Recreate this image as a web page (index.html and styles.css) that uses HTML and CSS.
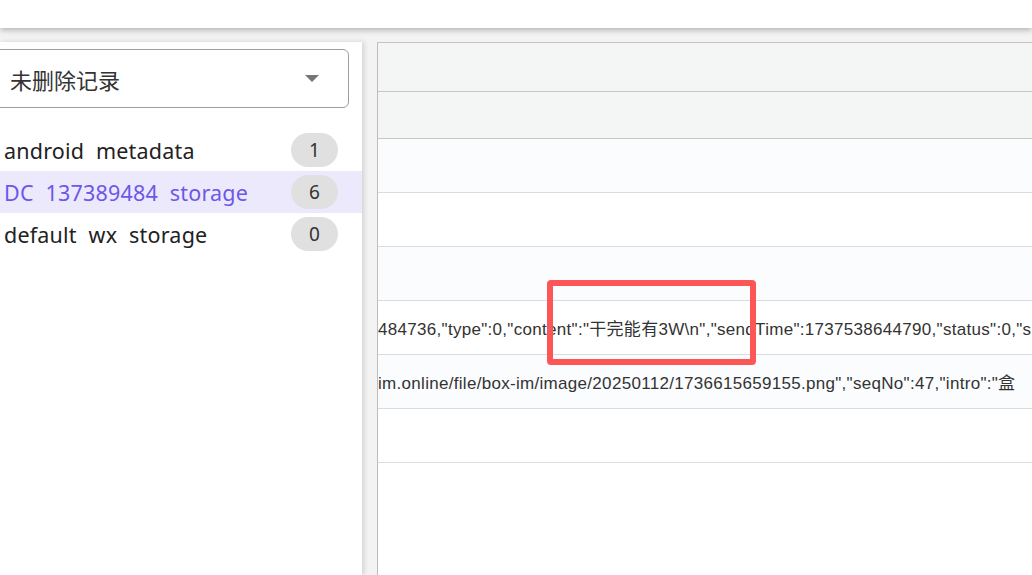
FILE: index.html
```html
<!DOCTYPE html>
<html lang="zh-CN">
<head>
    <meta charset="UTF-8">
    <meta name="viewport" content="width=device-width, initial-scale=1.0">
    <title>存储查看</title>
    <link rel="stylesheet" href="styles.css">
</head>
<body>
    <header class="top-bar"></header>

    <div class="main">
        <!-- 左侧：表列表 -->
        <aside class="sidebar">
            <div class="select-box">
                <span class="select-text">未删除记录</span>
                <span class="select-arrow"></span>
            </div>
            <ul class="table-list">
                <li class="table-item">
                    <span class="table-name">android metadata</span>
                    <span class="badge">1</span>
                </li>
                <li class="table-item active">
                    <span class="table-name">DC 137389484 storage</span>
                    <span class="badge">6</span>
                </li>
                <li class="table-item">
                    <span class="table-name">default wx storage</span>
                    <span class="badge">0</span>
                </li>
            </ul>
        </aside>

        <!-- 右侧：数据表 -->
        <section class="panel">
            <div class="head-row"></div>
            <div class="head-row second"></div>
            <div class="data-row"></div>
            <div class="data-row"></div>
            <div class="data-row"></div>
            <div class="data-row"><span class="cell">484736,"type":0,"content":"干完能有3W\n","sendTime":1737538644790,"status":0,"s</span></div>
            <div class="data-row"><span class="cell">im.online/file/box-im/image/20250112/1736615659155.png","seqNo":47,"intro":"盒</span></div>
            <div class="data-row"></div>
        </section>
    </div>

    <div class="mark-box"></div>
</body>
</html>
```

FILE: styles.css
```css
body {
    margin: 0;
    height: 575px;
    overflow: hidden;
    background-color: #f3f3f3;
    font-family: 'Noto Sans', 'Noto Sans CJK SC', sans-serif;
    color: #222;
    position: relative;
}
.top-bar {
    height: 28px;
    background: #fff;
    box-shadow: 0 2px 6px rgba(0, 0, 0, 0.28);
    position: relative;
    z-index: 2;
}
.main {
    display: flex;
    gap: 15px;
    padding-top: 14px;
    height: 533px;
}
.sidebar {
    width: 362px;
    flex-shrink: 0;
    background: #fff;
    box-shadow: 2px 0 5px rgba(0, 0, 0, 0.14);
    padding: 7px 13px 0 0;
    box-sizing: border-box;
}
.select-box {
    margin-left: -12px;
    height: 59px;
    box-sizing: border-box;
    border: 1px solid #9e9e9e;
    border-radius: 6px;
    display: flex;
    align-items: center;
    justify-content: space-between;
    padding: 0 29px 0 21px;
}
.select-text {
    font-family: 'Noto Sans CJK SC', sans-serif;
    font-size: 22px;
    color: #333;
}
.select-arrow {
    width: 0;
    height: 0;
    border-left: 7px solid transparent;
    border-right: 7px solid transparent;
    border-top: 7px solid #757575;
}
.table-list {
    list-style: none;
    margin: 21px -13px 0 0;
    padding: 0;
}
.table-item {
    height: 42px;
    display: flex;
    align-items: center;
    justify-content: space-between;
    padding: 0 24px 0 4px;
}
.table-item.active {
    background: #ede9fc;
    color: #6b58e8;
}
.table-name {
    font-size: 21.5px;
    word-spacing: 6px;
    letter-spacing: 0.2px;
}
.badge {
    width: 47px;
    height: 34px;
    border-radius: 17px;
    background: #e0e0e0;
    color: #333;
    font-size: 19px;
    display: flex;
    align-items: center;
    justify-content: center;
}
.panel {
    flex: 1;
    background: #fff;
    border-left: 1px solid #bdbdbd;
    border-top: 1px solid #c4c4c4;
    overflow: hidden;
}
.head-row {
    height: 48px;
    background: #f4f5f5;
    border-bottom: 1px solid #c6c8c8;
}
.head-row.second {
    height: 46px;
}
.data-row {
    height: 53px;
    border-bottom: 1px solid #dcdcdc;
    display: flex;
    align-items: center;
    white-space: nowrap;
    overflow: hidden;
}
.data-row:nth-child(odd) {
    background: #fbfcfe;
}
.cell {
    font-family: 'Liberation Sans', 'Noto Sans CJK SC', sans-serif;
    font-size: 17px;
    letter-spacing: 0.3px;
    color: #333;
}
.mark-box {
    position: absolute;
    left: 547px;
    top: 280px;
    width: 209px;
    height: 85px;
    box-sizing: border-box;
    border: 6px solid #fd5656;
    border-radius: 4px;
}
```
